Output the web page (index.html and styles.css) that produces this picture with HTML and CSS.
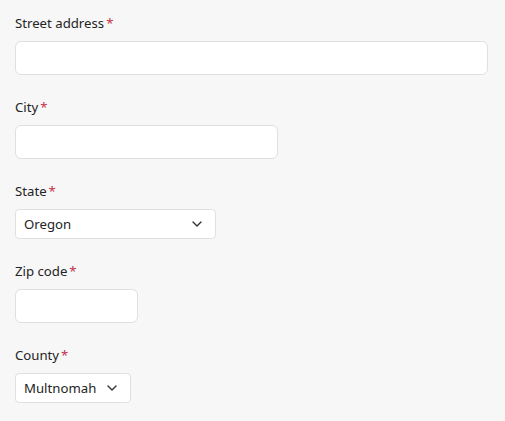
FILE: index.html
```html
<!DOCTYPE html>
<html lang="en">
<head>
<meta charset="utf-8">
<title>Address form</title>
<link rel="stylesheet" href="styles.css">
</head>
<body>
<form class="form">
  <div class="field">
    <label class="label">Street address<span class="req">*</span></label>
    <div class="input input-street"></div>
  </div>
  <div class="field">
    <label class="label">City<span class="req">*</span></label>
    <div class="input input-city"></div>
  </div>
  <div class="field">
    <label class="label">State<span class="req">*</span></label>
    <div class="select select-state">
      <span class="select-value">Oregon</span>
      <svg class="chevron" width="10" height="6" viewBox="0 0 10 6"><path d="M1 1 L5 5 L9 1" fill="none" stroke="#333" stroke-width="1.4" stroke-linecap="round" stroke-linejoin="round"/></svg>
    </div>
  </div>
  <div class="field">
    <label class="label">Zip code<span class="req">*</span></label>
    <div class="input input-zip"></div>
  </div>
  <div class="field">
    <label class="label">County<span class="req">*</span></label>
    <div class="select select-county">
      <span class="select-value">Multnomah</span>
      <svg class="chevron" width="10" height="6" viewBox="0 0 10 6"><path d="M1 1 L5 5 L9 1" fill="none" stroke="#333" stroke-width="1.4" stroke-linecap="round" stroke-linejoin="round"/></svg>
    </div>
  </div>
</form>
</body>
</html>
```
FILE: styles.css
```css
html, body {
  margin: 0;
  padding: 0;
  background: #f7f7f7;
}
body {
  font-family: "Noto Sans", "Open Sans", sans-serif;
  font-size: 13.2px;
  color: #242424;
}
.form {
  display: flex;
  flex-direction: column;
  gap: 22px;
  padding: 13px 17px 0 15px;
}
.field {
  display: flex;
  flex-direction: column;
  align-items: flex-start;
  gap: 8px;
}
.label {
  line-height: 20px;
  height: 20px;
}
.req {
  color: #c4314b;
  margin-left: 2px;
}
.input {
  box-sizing: border-box;
  height: 34px;
  background: #fff;
  border: 1px solid #e0e0e0;
  border-radius: 6px;
}
.input-street { align-self: stretch; }
.input-city { width: 263px; }
.input-zip { width: 123px; }
.select {
  box-sizing: border-box;
  height: 30px;
  background: #fff;
  border: 1px solid #e0e0e0;
  border-radius: 4px;
  display: flex;
  align-items: center;
  justify-content: space-between;
  padding: 0 13px 0 8px;
}
.select-state { width: 201px; }
.select-county { width: 116px; }
.select-value {
  line-height: 20px;
}
.chevron {
  display: block;
  flex: none;
}
```
